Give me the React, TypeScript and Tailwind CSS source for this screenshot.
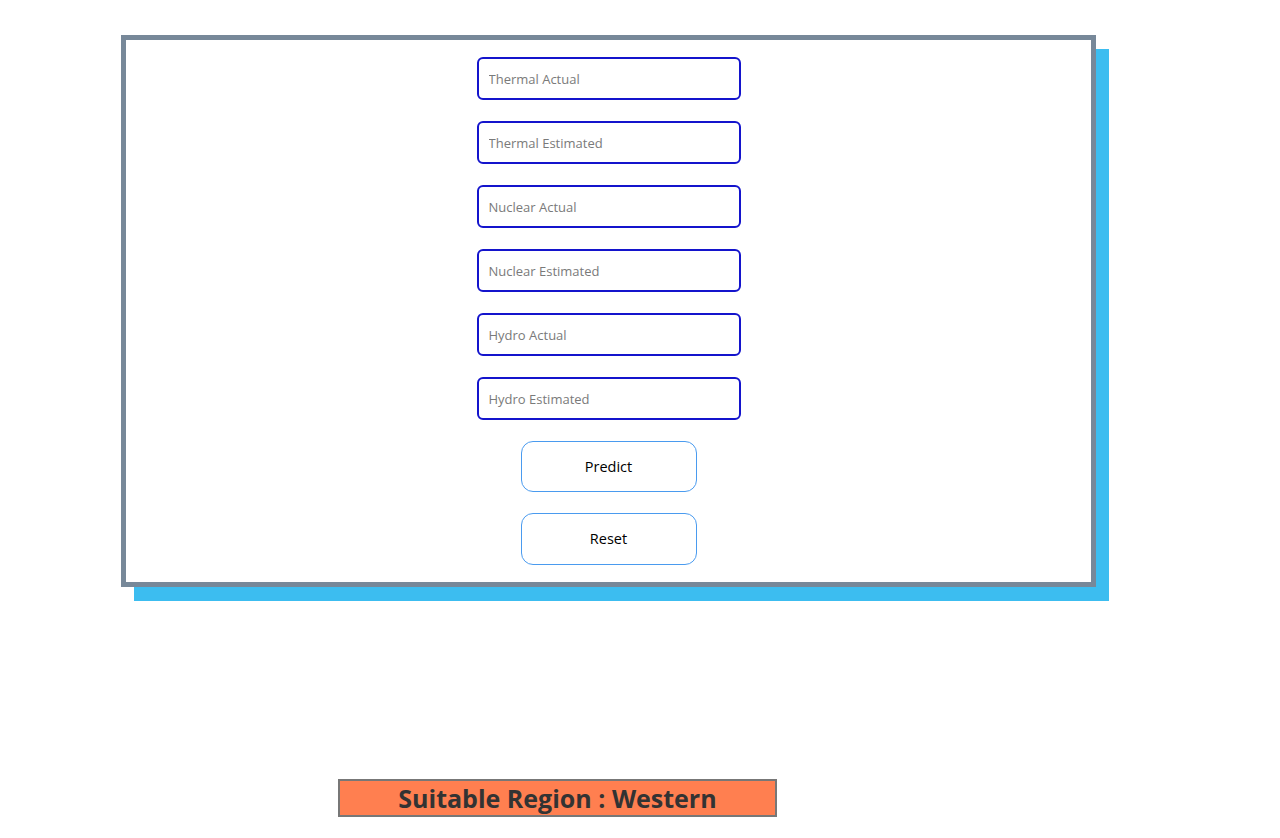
const fields = [
  "Thermal Actual",
  "Thermal Estimated",
  "Nuclear Actual",
  "Nuclear Estimated",
  "Hydro Actual",
  "Hydro Estimated",
];

export default function App() {
  return (
    <div className="min-h-[838px] bg-white pt-[35px] font-['Open_Sans','Noto_Sans',sans-serif]">
      <form
        onSubmit={(e) => e.preventDefault()}
        className="ml-[121px] flex w-[975px] flex-col items-center gap-[21px] border-[5px] border-[#778899] bg-white py-[17px] shadow-[13px_14px_0_#3cbdf0]"
      >
        {fields.map((f) => (
          <input
            key={f}
            type="text"
            placeholder={f}
            className="h-[43px] w-[264px] rounded-[6px] border-2 border-[#1414cc] px-[10px] text-[13px] text-gray-700 placeholder:text-[#7a7a7a] focus:outline-none"
          />
        ))}
        <button
          type="submit"
          className="h-[51px] w-[176px] rounded-[12px] border border-[#4a9bef] bg-white text-[14.5px] text-black"
        >
          Predict
        </button>
        <button
          type="reset"
          className="h-[52px] w-[176px] rounded-[12px] border border-[#4a9bef] bg-white text-[14.5px] text-black"
        >
          Reset
        </button>
      </form>

      <div className="ml-[338px] mt-[192px] flex h-[38px] w-[439px] items-center justify-center border-2 border-[#777777] bg-[#ff7f50]">
        <span className="text-[25px] font-bold leading-none text-[#333333]">
          Suitable Region : Western
        </span>
      </div>
    </div>
  );
}
